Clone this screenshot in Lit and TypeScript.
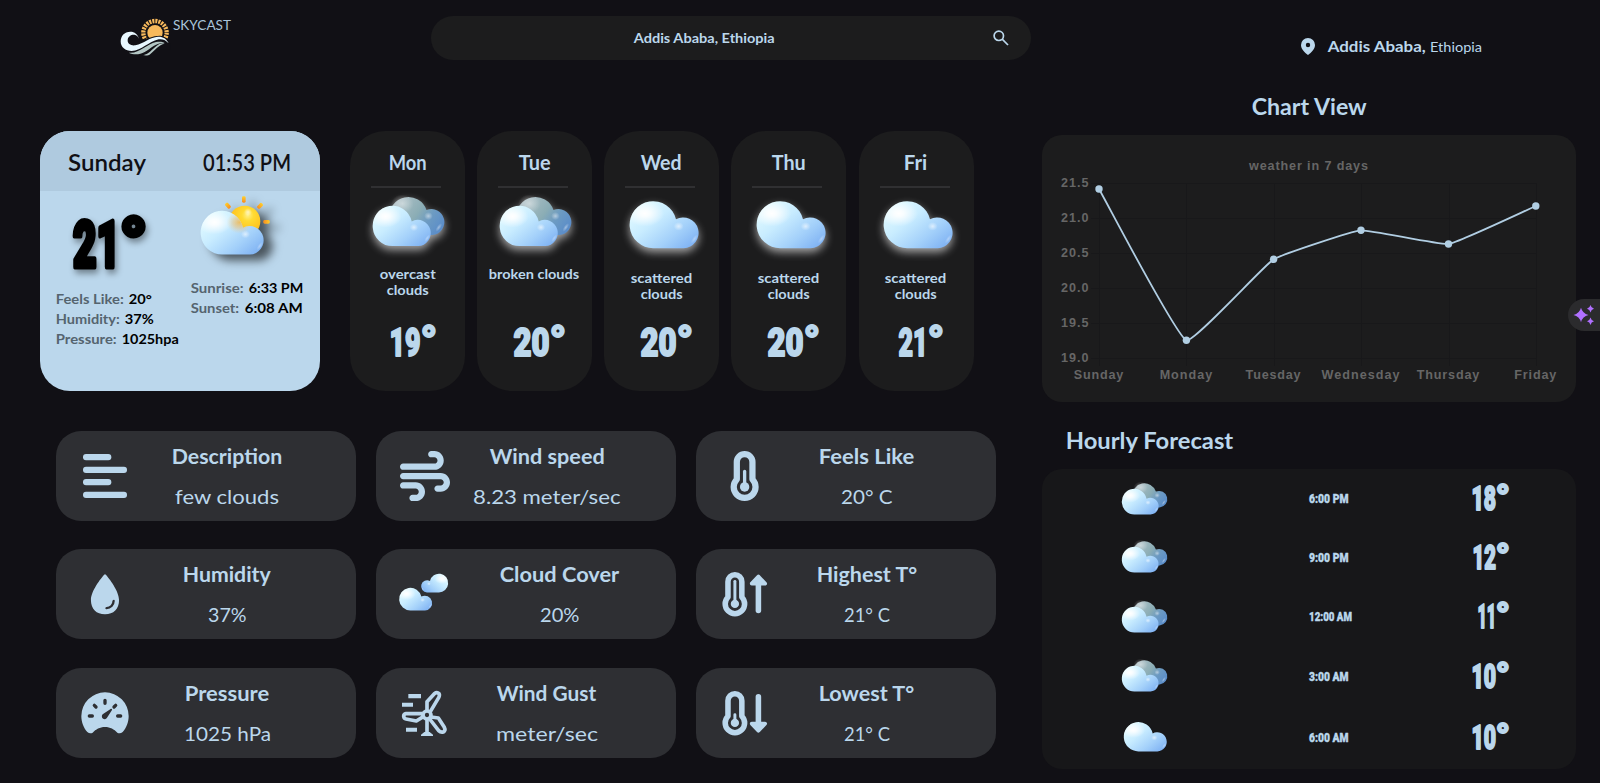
import { LitElement, html, svg, css } from "lit";
import { customElement } from "lit/decorators.js";

type Tone = "regular" | "medium" | "bold" | "narrow";

// One line of text fitted to a given width; the box is as tall as the capitals.
const line = (text: string, width: number, size: number, tone: Tone = "regular", extra = "") => {
  const h = size * 0.72;
  return html`<svg class="line ${extra}" width=${width} height=${h}>
    <text class=${tone} x=${tone === "bold" ? -0.3 : 0} y=${h} font-size=${size} textLength=${width} lengthAdjust="spacingAndGlyphs">${text}</text>
  </svg>`;
};

// Temperature: condensed heavy digits followed by a large degree ring.
const degrees = (value: string, digitWidth: number, cap: number, gap: number, ring: number, stroke: number) => {
  const size = (cap - stroke) / 0.711;
  return html`<svg class="line degrees" width=${digitWidth + gap + ring} height=${cap} stroke-width=${stroke}>
    <text class="black" y=${cap - stroke / 2} font-size=${size}
      ><tspan x=${stroke / 2 - 0.5} textLength=${digitWidth - stroke + 1} lengthAdjust="spacingAndGlyphs">${value}</tspan
      ><tspan dx=${gap} dy=${size * 0.02} font-size=${size * 1.1}>°</tspan></text>
  </svg>`;
};

const cloudShape = "M70.5 141.5A70.5 70.5 0 1 1 138 55A46 46 0 1 1 161 141.5Z";

const defs = svg`<defs>
  <linearGradient id="body" x1="0.1" y1="0.1" x2="1" y2="0.85">
    <stop offset="0" stop-color="#e2fbff"/><stop offset="0.35" stop-color="#c8ecff"/>
    <stop offset="0.7" stop-color="#a3d0fa"/><stop offset="1" stop-color="#7fb2f3"/>
  </linearGradient>
  <radialGradient id="shine" cx="0.22" cy="0.26" r="0.28">
    <stop offset="0" stop-color="#fff"/><stop offset="0.25" stop-color="#fff" stop-opacity="0.85"/><stop offset="1" stop-color="#fff" stop-opacity="0"/>
  </radialGradient>
  <radialGradient id="spot"><stop offset="0" stop-color="#fff" stop-opacity="0.6"/><stop offset="1" stop-color="#fff" stop-opacity="0"/></radialGradient>
  <linearGradient id="back" x1="0" y1="0.2" x2="1" y2="0.7">
    <stop offset="0" stop-color="#b4c3c8"/><stop offset="0.5" stop-color="#8badb5"/>
    <stop offset="0.72" stop-color="#6d9bc2"/><stop offset="1" stop-color="#5b8dc9"/>
  </linearGradient>
  <radialGradient id="sun" cx="0.6" cy="0.3" r="0.75">
    <stop offset="0" stop-color="#fff08a"/><stop offset="0.25" stop-color="#ffdb33"/><stop offset="0.7" stop-color="#ffc21f"/><stop offset="1" stop-color="#f79a1c"/>
  </radialGradient>
  <linearGradient id="ray" x1="0" y1="0" x2="0" y2="1"><stop offset="0" stop-color="#ffd02e"/><stop offset="1" stop-color="#f78b1f"/></linearGradient>
  <radialGradient id="warm"><stop offset="0" stop-color="#f9b233" stop-opacity="0.75"/><stop offset="0.5" stop-color="#efc070" stop-opacity="0.5"/><stop offset="1" stop-color="#efd0a0" stop-opacity="0"/></radialGradient>
</defs>`;

const cloud = svg`
  <path d=${cloudShape} fill="url(#body)"/>
  <path d=${cloudShape} fill="url(#shine)"/>
  <ellipse cx="146" cy="76" rx="15" ry="13" fill="url(#spot)"/>
  <ellipse cx="193" cy="114" rx="6" ry="16" transform="rotate(35 193 114)" fill="url(#spot)" opacity="0.6"/>`;

const single = (w: number, cls = "") => html`<svg class=${cls} width=${w} height=${(w * 142) / 207} viewBox="0 0 207 142">${defs}${cloud}</svg>`;

const broken = (w: number, cls = "") => html`<svg class=${cls} width=${w} height=${(w * 153) / 217} viewBox="0 0 217 153">
  ${defs}
  <path d="M104 120A57 57 0 1 1 160 45A39 39 0 1 1 178 120Z" fill="url(#back)"/>
  <ellipse cx="88" cy="26" rx="34" ry="28" fill="url(#spot)" opacity="0.7"/>
  <ellipse cx="166" cy="63" rx="13" ry="12" fill="url(#spot)" opacity="0.8"/>
  <ellipse cx="197" cy="97" rx="6" ry="15" transform="rotate(35 197 97)" fill="url(#spot)" opacity="0.7"/>
  <g transform="translate(0 32) scale(0.84 0.855)">${cloud}</g>
</svg>`;

const partlySunny = html`<svg class="sunny" width="69" height="58.7" viewBox="0 0 207 176">
  ${defs}
  <rect x="123" y="1" width="11" height="19" rx="4" fill="url(#ray)"/>
  <rect x="75" y="20" width="11" height="19" rx="4" transform="rotate(-42 80 29)" fill="url(#ray)"/>
  <rect x="172" y="20" width="11" height="19" rx="4" transform="rotate(45 177 29)" fill="url(#ray)"/>
  <rect x="192" y="68" width="11" height="19" rx="4" transform="rotate(90 197 77)" fill="url(#ray)"/>
  <circle cx="131" cy="76" r="47" fill="url(#sun)"/>
  <circle cx="141" cy="48" r="12" fill="url(#spot)"/>
  <g transform="translate(0 44) scale(0.913 0.93)">${cloud}
    <clipPath id="clip"><path d=${cloudShape}/></clipPath>
    <ellipse cx="126" cy="38" rx="42" ry="36" fill="url(#warm)" clip-path="url(#clip)"/>
  </g>
</svg>`;

const twoClouds = html`<svg class="cover" width="50" height="38" viewBox="0 0 150 114">
  ${defs}
  <g transform="translate(147 2) scale(-0.392 0.4)">${cloud}</g>
  <g transform="translate(1 44) scale(0.478 0.485)">${cloud}</g>
</svg>`;

const thermometer = (lineTop: number) => svg`
  <path d="M80 112a80 80 0 0 1 160 0V290A112 112 0 1 1 80 290Z" fill="none" stroke="currentColor" stroke-width="64" stroke-linejoin="round"/>
  <circle cx="160" cy="368" r="48" fill="currentColor"/>
  <path d=${`M160 368V${lineTop}`} stroke="currentColor" stroke-width="34" stroke-linecap="round"/>`;

const icons: Record<string, unknown> = {
  lines: html`<svg width="50" height="50" viewBox="120 93 150 150" fill="currentColor">
    <rect x="129" y="102" width="85" height="19" rx="9"/><rect x="129" y="140" width="132" height="19" rx="9"/>
    <rect x="129" y="177" width="85" height="19" rx="9"/><rect x="129" y="215" width="132" height="19" rx="9"/></svg>`,
  wind: html`<svg width="50" height="50" viewBox="0 0 512 512" fill="currentColor"><path d="M288 32c0 17.700 14.300 32 32 32h32c17.700 0 32 14.300 32 32s-14.300 32-32 32H32c-17.700 0-32 14.300-32 32s14.300 32 32 32H352c53 0 96-43 96-96s-43-96-96-96H320c-17.700 0-32 14.300-32 32zm64 352c0 17.700 14.300 32 32 32h32c53 0 96-43 96-96s-43-96-96-96H32c-17.700 0-32 14.300-32 32s14.300 32 32 32H416c17.700 0 32 14.300 32 32s-14.300 32-32 32H384c-17.700 0-32 14.300-32 32zM128 512h32c53 0 96-43 96-96s-43-96-96-96H32c-17.700 0-32 14.300-32 32s14.300 32 32 32H160c17.700 0 32 14.300 32 32s-14.300 32-32 32H128c-17.700 0-32 14.300-32 32s14.300 32 32 32z"/></svg>`,
  feels: html`<svg width="31.250" height="50" viewBox="0 0 320 512">${thermometer(210)}</svg>`,
  high: html`<svg class="level" width="50" height="44.400" viewBox="0 0 576 512">${thermometer(108)}
    <path d="M431 445V130" stroke="currentColor" stroke-width="64" stroke-linecap="round"/>
    <path d="M431 52L508 134H354Z" fill="currentColor" stroke="currentColor" stroke-width="44" stroke-linejoin="round"/></svg>`,
  low: html`<svg class="level" width="50" height="44.400" viewBox="0 0 576 512">${thermometer(274)}
    <path d="M431 66V380" stroke="currentColor" stroke-width="64" stroke-linecap="round"/>
    <path d="M431 458L508 376H354Z" fill="currentColor" stroke="currentColor" stroke-width="44" stroke-linejoin="round"/></svg>`,
  drop: html`<svg width="50" height="50" viewBox="0 0 512 512" fill="currentColor"><path d="M265.120 60.120a12 12 0 0 0-18.230 0C215.230 97.150 112 225.170 112 320c0 88.370 55.640 144 144 144s144-55.630 144-144c0-94.830-103.230-222.850-134.880-259.880zM272 412a12 12 0 0 1-11.340-16 11.890 11.890 0 0 1 11.410-8A60.060 60.060 0 0 0 332 328.070 11.890 11.890 0 0 1 340 316.660 12 12 0 0 1 356 328a84.090 84.090 0 0 1-84 84z"/></svg>`,
  clouds: twoClouds,
  gauge: html`<svg width="50" height="50" viewBox="120 804 150 150">
    <path d="M158 938Q150 943 142 936C131 924 124 906 124 888A71 71 0 0 1 266 888C266 906 259 924 248 936Q240 943 232 938C222 928 211 921 195 921C179 921 168 928 158 938Z" fill="currentColor"/>
    <path d="M195 841V850M163 856L168 861M227 856L222 861M148 888H157M233 888H242" fill="none" stroke="#2e2f33" stroke-width="10" stroke-linecap="round"/>
    <path d="M188 883L213 866Q217 866 216 870L202 892A8.500 8.500 0 1 1 188 883Z" fill="#2e2f33"/></svg>`,
  gust: html`<svg width="50" height="50" viewBox="120 804 150 150">
    <path d="M145 822h38v13h-38zM126 848h33v12h-33zM138 923h33v12h-33zM183 948v-4l10-8h16l10 8v4z" fill="currentColor"/>
    <g fill="none" stroke="currentColor" stroke-width="11" stroke-linejoin="round">
      <circle cx="201" cy="885" r="12"/>
      <path d="M201 871V845L223 821Q231 815 237 821Q240 825 236 833L211 875"/>
      <path d="M188 881H138Q131 882 131 889Q132 896 138 897L169 903L190 890"/>
      <path d="M213 891L235 894L253 922Q258 932 250 936Q242 938 236 932L209 897"/>
      <path d="M201 899V940"/>
    </g></svg>`,
};

const logo = html`<svg width="50" height="38" viewBox="60 55 150 114">
  <circle cx="165" cy="99" r="35" fill="none" stroke="#f7b95c" stroke-width="13" stroke-dasharray="6.200 2.960"/>
  <circle cx="165" cy="99" r="23" fill="#f7b95c"/>
  <path d="M120 119C135 122 155 108 180 108C195 110 205 120 212 135V150H120Z" fill="#111015"/>
  <path d="M119 121C113 103 104 96 91 96C73 96 62 109 62 125C62 143 76 154 95 154C125 153 145 126 176 119C188 117 198 122 206 131C199 116 187 110 174 111C150 112 132 131 106 137C93 139 82 132 83 121C84 109 96 103 106 106C112 108 116 113 119 121Z" fill="#e9f8ff"/>
  <path d="M86 159C118 163 140 133 168 127C178 125 188 126 194 129C170 128 152 146 134 157C118 166 100 166 86 159Z" fill="#b3c6c4"/>
  <path d="M130 167C146 162 150 156 158 149C168 140 174 133 186 131C190 130 193 131 194 132C176 135 166 151 152 162C146 168 138 168 130 167Z" fill="#b3c6c4"/>
</svg>`;

const days = [
  { name: "Mon", w: 38, icon: "broken", text: [["overcast", 56], ["clouds", 42]], t: "19", tw: 32 },
  { name: "Tue", w: 32, icon: "broken", text: [["broken clouds", 90.5]], t: "20", tw: 37 },
  { name: "Wed", w: 41, icon: "single", text: [["scattered", 61.500], ["clouds", 42]], t: "20", tw: 37 },
  { name: "Thu", w: 34, icon: "single", text: [["scattered", 61.500], ["clouds", 42]], t: "20", tw: 37 },
  { name: "Fri", w: 23.500, icon: "single", text: [["scattered", 61.500], ["clouds", 42]], t: "21", tw: 30 },
] as { name: string; w: number; icon: string; text: [string, number][]; t: string; tw: number }[];

const stats: [string, string, number, string, number][] = [
  ["lines", "Description", 110.500, "few clouds", 104],
  ["wind", "Wind speed", 115, "8.23 meter/sec", 147.500],
  ["feels", "Feels Like", 95.500, "20° C", 51.500],
  ["drop", "Humidity", 88, "37%", 38.500],
  ["clouds", "Cloud Cover", 119.500, "20%", 39.500],
  ["high", "Highest T°", 100.500, "21° C", 46],
  ["gauge", "Pressure", 84.500, "1025 hPa", 87],
  ["gust", "Wind Gust", 99.500, "meter/sec", 102],
  ["low", "Lowest T°", 95.500, "21° C", 46],
];

const hours: [string, string, number, string, number][] = [
  ["broken", "6:00 PM", 39.500, "18", 25],
  ["broken", "9:00 PM", 39.500, "12", 24],
  ["broken", "12:00 AM", 43, "11", 19],
  ["broken", "3:00 AM", 39.500, "10", 25],
  ["single", "6:00 AM", 39.500, "10", 25],
];

const series: [string, number, number, number][] = [
  ["Sunday", 49.500, 57, 54],
  ["Monday", 52.500, 144.400, 205.300],
  ["Tuesday", 55, 231.600, 124.300],
  ["Wednesday", 78, 319, 95.300],
  ["Thursday", 62.500, 406.500, 109],
  ["Friday", 42, 493.800, 71],
];

// Smooth line through the points, with handles weighted by neighbour distance.
const curve = (tension: number) => {
  const pts = series.map(([, , x, y]) => ({ x, y }));
  const handles = pts.map((p, i) => {
    const a = pts[Math.max(i - 1, 0)];
    const b = pts[Math.min(i + 1, pts.length - 1)];
    const d1 = Math.hypot(p.x - a.x, p.y - a.y);
    const d2 = Math.hypot(b.x - p.x, b.y - p.y);
    const f1 = (tension * d1) / (d1 + d2);
    const f2 = (tension * d2) / (d1 + d2);
    return {
      in: [p.x - f1 * (b.x - a.x), p.y - f1 * (b.y - a.y)],
      out: [p.x + f2 * (b.x - a.x), p.y + f2 * (b.y - a.y)],
    };
  });
  return pts.map((p, i) => (i ? `C${handles[i - 1].out} ${handles[i].in} ${p.x},${p.y}` : `M${p.x},${p.y}`)).join("");
};

const base = css`
  svg { display: block; flex: none; overflow: visible; }
  .line text { fill: currentColor; font-family: Lato, "Open Sans", sans-serif; font-weight: 400; }
  .line text.medium { font-weight: 600; }
  .line text.bold { font-weight: 700; }
  .line text.black, .line text.narrow { font-family: Roboto, "Open Sans", sans-serif; font-weight: 900; }
  .line text.narrow { stroke: currentColor; stroke-width: 0.4px; }
  .degrees text { stroke: currentColor; stroke-linejoin: round; }
`;

@customElement("weather-chart")
export class WeatherChart extends LitElement {
  static styles = css`
    :host { display: block; }
    svg { display: block; }
    text { font: bold 12.6px "Liberation Sans", sans-serif; fill: #666; }
    .grid { stroke: #18181a; fill: none; }
    .curve { stroke: #b1cee3; stroke-width: 1.8; fill: none; }
    circle { fill: #b1cee3; }
  `;
  render() {
    const ys = [48.500, 83.500, 118.500, 153.500, 188.500, 223.500];
    const labels = ["21.5", "21.0", "20.5", "20.0", "19.5", "19.0"];
    return html`<svg width="534" height="267">
      <text x="207" y="35" textLength="119">weather in 7 days</text>
      ${ys.map((y, i) => svg`<path class="grid" d=${`M49 ${y}H494`}/><text x="19" y=${y + 3.5} textLength="27.5">${labels[i]}</text>`)}
      ${series.map(([name, w, x]) => svg`<path class="grid" d=${`M${Math.round(x) + 0.5} 48V231`}/><text x=${x - w / 2 - 0.5} y="244" textLength=${w}>${name}</text>`)}
      <path class="curve" d=${curve(0.1)}/>
      ${series.map(([, , x, y]) => svg`<circle cx=${x} cy=${y} r="3.700"/>`)}
    </svg>`;
  }
}

@customElement("app-root")
export class AppRoot extends LitElement {
  static styles = [
    base,
    css`
      :host { display: flex; height: 783px; overflow: hidden; position: relative; background: #111015; color: #bbd7ec; }
      .left { width: 1042px; flex: none; }
      .right { width: 534px; flex: none; }
      header { display: flex; align-items: flex-start; height: 131px; }
      .brand { display: flex; gap: 2.500px; box-sizing: border-box; width: 431px; padding: 18px 0 0 120px; }
      .brand .line { margin-top: 3px; color: #a9c4da; }
      .search { display: flex; align-items: center; justify-content: space-between; box-sizing: border-box; width: 600px; height: 44px; margin-top: 16px; padding: 0 22px 0 203px; border-radius: 22px; background: #1c1c1d; }
      .row { display: flex; gap: 30px; padding-left: 40px; height: 260px; }
      .today { width: 280px; border-radius: 30px; overflow: hidden; background: #bbd7ec; color: #000; }
      .bar { display: flex; align-items: center; justify-content: space-between; height: 60px; box-sizing: border-box; padding: 3px 29px 0 28px; background: #afcadf; color: #111015; }
      .cols { display: flex; padding-left: 16.300px; }
      .now { width: 135px; padding-top: 27px; }
      .now .degrees { margin: 0 0 25px 15px; filter: drop-shadow(2px 4px 3px rgba(0, 0, 0, 0.4)); }
      .fact { display: flex; gap: 5px; margin-bottom: 10.300px; }
      .fact .dim { color: #55646f; }
      .sunny { margin: 4.500px 0 29px 10px; filter: drop-shadow(9px 6px 5px rgba(0, 0, 0, 0.6)); }
      .days { display: flex; gap: 12.150px; }
      .day { display: flex; flex-direction: column; align-items: center; width: 115px; border-radius: 35px; background: #1c1c1d; }
      .day > .line:first-child { margin-top: 24.500px; }
      .rule { width: 70px; height: 2px; margin: 16px 0 0 -3px; background: #303032; }
      .sky { display: flex; flex-direction: column; align-items: center; height: 137px; }
      .pair { margin: 7.500px 0 22px 4px; filter: drop-shadow(0 4px 4px rgba(255, 255, 255, 0.6)); }
      .solo { margin: 13px 0 25px 5px; filter: drop-shadow(0 4px 4px rgba(255, 255, 255, 0.6)); }
      .sky .line { margin-bottom: 6.400px; }
      .day > .degrees { margin: 2px 0 0 7px; }
      .stats { display: grid; grid-template: 90px 91px 90px / repeat(3, 300px); gap: 28px 20px; padding: 40px 0 0 56px; align-items: start; }
      .stat { display: flex; height: 90px; border-radius: 25px; background: #2e2f33; }
      .glyph { display: flex; align-items: center; justify-content: center; width: 98px; }
      .level { margin-left: 1.500px; }
      .cover { margin: 0 2px 5px 0; }
      .words { display: flex; flex-direction: column; align-items: center; gap: 25.400px; width: 146px; padding-top: 18px; }
      .words.wide { width: 171.500px; }
      .place { display: flex; align-items: flex-end; height: 51.500px; padding-left: 259px; box-sizing: border-box; }
      .place svg:first-child { margin: 0 12.500px -3px 0; }
      .place .thin { margin-left: 4.500px; }
      .title { display: flex; align-items: flex-end; }
      .title.chart { justify-content: center; height: 63px; margin-bottom: 20.500px; }
      .title.hourly { height: 46.500px; padding-left: 24px; margin-bottom: 20.500px; }
      .panel { border-radius: 20px; background: #1c1c1d; height: 267px; }
      .hours { display: grid; grid-template-rows: 58px 59px 60px 59px 64px; height: 300px; box-sizing: border-box; padding: 0 67px 0 80px; border-radius: 20px; background: #171719; }
      .hour { display: grid; grid-template-columns: 186.500px 1fr auto; align-items: center; }
      .hour .narrow { transform: translateY(0.8px); }
      .hour .fog { margin-left: 2px; }
      .helper { position: absolute; right: 0; top: 299px; width: 32px; height: 32px; border-radius: 16px 0 0 16px; background: #2b2b2d; color: #b070ff; }
    `,
  ];

  fact(label: string, lw: number, value: string, vw: number) {
    return html`<div class="fact">${line(label, lw, 13.5, "bold", "dim")}${line(value, vw, 13.5, "bold")}</div>`;
  }

  render() {
    return html`
      <div class="left">
        <header>
          <div class="brand">${logo}${line("SKYCAST", 58, 13)}</div>
          <div class="search">
            ${line("Addis Ababa, Ethiopia", 141, 13.3, "bold")}
            <svg width="16" height="16" viewBox="0 0 16 16" fill="none" stroke="currentColor" stroke-width="1.700"><circle cx="5.800" cy="5.800" r="4.700"/><path d="M9.200 9.200L15 15"/></svg>
          </div>
        </header>
        <div class="row">
          <section class="today">
            <div class="bar">${line("Sunday", 78, 22, "medium")}${line("01:53 PM", 88, 22, "medium")}</div>
            <div class="cols">
              <div class="now">
                ${degrees("21", 51, 51, -0.5, 21, 5)}
                ${this.fact("Feels Like:", 68, "20°", 23)}
                ${this.fact("Humidity:", 64, "37%", 29)}
                ${this.fact("Pressure:", 61, "1025hpa", 57)}
              </div>
              <div>
                ${partlySunny}
                ${this.fact("Sunrise:", 53, "6:33 PM", 54.5)}
                ${this.fact("Sunset:", 48.5, "6:08 AM", 58)}
              </div>
            </div>
          </section>
          <div class="days">
            ${days.map(
              (d) => html`<section class="day">
                ${line(d.name, d.w, 20, "bold")}
                <div class="rule"></div>
                <div class="sky">
                  ${d.icon === "broken" ? broken(72.5, "pair") : single(69, "solo")}
                  ${d.text.map(([t, w]) => line(t, w, 13.5, "bold"))}
                </div>
                ${degrees(d.t, d.tw, 29.5, 0, 13, 2)}
              </section>`
            )}
          </div>
        </div>
        <div class="stats">
          ${stats.map(
            ([icon, a, aw, b, bw]) => html`<section class="stat">
              <div class="glyph">${icons[icon]}</div>
              <div class="words ${icon === "clouds" ? "wide" : ""}">${line(a, aw, 21, "bold")}${line(b, bw, 20)}</div>
            </section>`
          )}
        </div>
      </div>
      <div class="right">
        <div class="place">
          <svg width="14" height="17" viewBox="0 0 14 17" fill="currentColor" fill-rule="evenodd"><path d="M7 0a7 7 0 0 1 7 7c0 4-3.500 7.500-7 10C3.500 14.500 0 11 0 7a7 7 0 0 1 7-7zm0 4.800a2.200 2.200 0 1 0 0 4.400 2.200 2.200 0 0 0 0-4.400z"/></svg>
          ${line("Addis Ababa,", 98, 16, "bold")}${line("Ethiopia", 52, 13.3, "regular", "thin")}
        </div>
        <div class="title chart">${line("Chart View", 115, 22, "bold")}</div>
        <div class="panel"><weather-chart></weather-chart></div>
        <div class="title hourly">${line("Hourly Forecast", 167.5, 22, "bold")}</div>
        <div class="hours">
          ${hours.map(
            ([icon, time, w, t, tw]) => html`<div class="hour">
              ${icon === "broken" ? broken(46) : single(43, "fog")}
              ${line(time, w, 13, "narrow")}
              ${degrees(t, tw + 0.5, 26, -0.5, 13, 2)}
            </div>`
          )}
        </div>
      </div>
      <div class="helper"><svg width="32" height="32" viewBox="0 0 32 32" fill="currentColor"><path d="M13 8.800Q14.500 14.500 20.500 16Q14.500 17.500 13 23.200Q11.500 17.500 5.500 16Q11.500 14.500 13 8.800ZM22.500 6Q23.200 9 26 9.800Q23.200 10.600 22.500 13.600Q21.800 10.600 19 9.800Q21.800 9 22.500 6ZM22.500 18.400Q23.200 21.400 26 22.200Q23.200 23 22.500 26Q21.800 23 19 22.200Q21.800 21.400 22.500 18.400Z"/></svg></div>
    `;
  }
}
